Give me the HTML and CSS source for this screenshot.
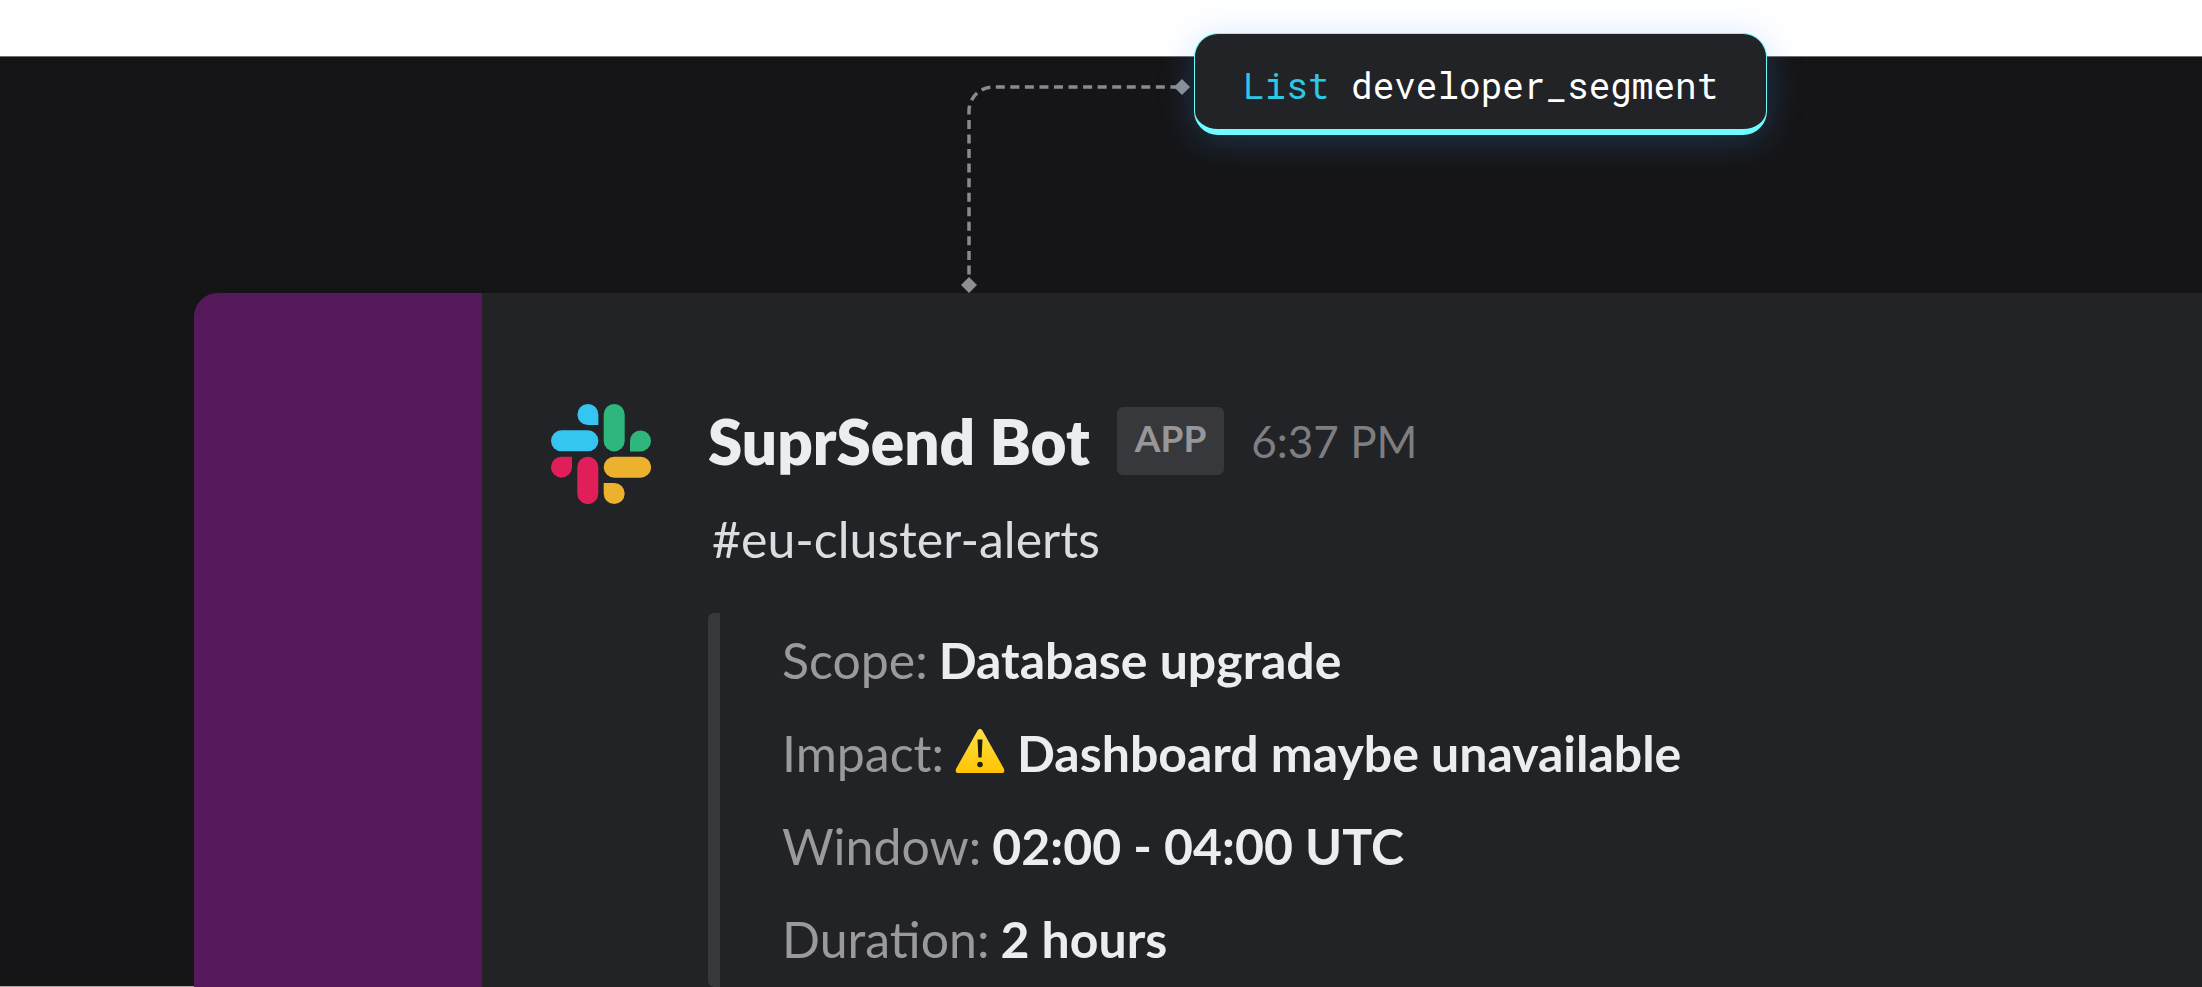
FILE: index.html
```html
<!DOCTYPE html>
<html lang="en">
<head>
  <meta charset="UTF-8">
  <meta name="viewport" content="width=device-width, initial-scale=1.0">
  <title>SuprSend Bot</title>
  <link rel="stylesheet" href="styles.css">
</head>
<body>

  <main class="stage">

    <!-- List tag and the line that ties it to the card -->
    <div class="segment">
      <svg class="connector" width="229" height="214" viewBox="0 0 229 214" aria-hidden="true">
        <path class="connector-line" d="M8 206V32A24 24 0 0 1 32 8H221"/>
        <path class="connector-end" d="M8 198l8 8-8 8-8-8zM221 0l8 8-8 8-8-8z"/>
      </svg>
      <div class="tag"><span class="tag-type">List</span> developer_segment</div>
    </div>

    <!-- Slack card -->
    <section class="card">
      <div class="sidebar"></div>

      <article class="message">
        <svg class="avatar" viewBox="0 0 100 100" role="img" aria-label="Slack">
          <g fill="#36c5f0">
            <rect x="0" y="26.3" width="47.4" height="21" rx="10.5"/>
            <path d="M47.4 21H36.9A10.5 10.5 0 1 1 47.4 10.5z"/>
          </g>
          <g fill="#2eb67d">
            <rect x="52.7" y="0" width="21" height="47.4" rx="10.5"/>
            <path d="M79 47.4V36.9A10.5 10.5 0 1 1 89.5 47.4z"/>
          </g>
          <g fill="#ecb22e">
            <rect x="52.7" y="52.7" width="47.4" height="21" rx="10.5"/>
            <path d="M52.7 79H63.2A10.5 10.5 0 1 1 52.7 89.5z"/>
          </g>
          <g fill="#e01e5a">
            <rect x="26.3" y="52.7" width="21" height="47.4" rx="10.5"/>
            <path d="M21 52.7V63.2A10.5 10.5 0 1 1 10.5 52.7z"/>
          </g>
        </svg>

        <div class="content">
          <header class="message-header">
            <h1 class="name">SuprSend Bot</h1>
            <span class="badge">APP</span>
            <time class="time">6:37 PM</time>
          </header>
          <p class="channel">#eu-cluster-alerts</p>

          <dl class="quote">
            <div class="row">
              <dt>Scope:</dt>
              <dd>Database upgrade</dd>
            </div>
            <div class="row">
              <dt>Impact:</dt>
              <dd>
                <svg class="warning" viewBox="0 0 50 46" aria-hidden="true">
                  <defs>
                    <linearGradient id="warning-fill" x1="0" y1="0" x2="0" y2="1">
                      <stop offset="0" stop-color="#ffe04a"/>
                      <stop offset="1" stop-color="#ffc400"/>
                    </linearGradient>
                  </defs>
                  <path fill="url(#warning-fill)" d="M22.6 2.4Q25-.8 27.4 2.4L48.8 40.5Q50.4 44.8 46.5 45H3.5Q-.4 44.8 1.2 40.5z"/>
                  <path fill="#1d1d10" d="M22.5 11.5h5L26.6 29.5h-3.2z"/>
                  <circle fill="#1d1d10" cx="25" cy="36.5" r="2.8"/>
                </svg>
                Dashboard maybe unavailable
              </dd>
            </div>
            <div class="row">
              <dt>Window:</dt>
              <dd>02:00 - 04:00 UTC</dd>
            </div>
            <div class="row">
              <dt>Duration:</dt>
              <dd>2 hours</dd>
            </div>
          </dl>
        </div>
      </article>
    </section>

  </main>

</body>
</html>
```

FILE: styles.css
```css
* {
  box-sizing: border-box;
}

body {
  display: flex;
  flex-direction: column;
  min-height: 100vh;
  margin: 0;
  padding-top: 56px;
  background-color: #ffffff;
  font-family: Lato, Carlito, sans-serif;
  overflow: hidden;
}

.stage {
  flex: 1;
  display: flex;
  flex-direction: column;
  background-color: #151517;
  border-top: 1px solid #6f6f70;
  border-bottom: 1px solid #a5a5a6;
}

/* Tag and connector */
.segment {
  display: flex;
  align-items: flex-start;
  gap: 4px;
  margin-top: -24px;
  padding-left: 961px;
}

.connector {
  flex: none;
  margin-top: 46px;
}

.connector-line {
  fill: none;
  stroke: #8a8a8c;
  stroke-width: 3.5;
  stroke-dasharray: 9 5.55;
  stroke-dashoffset: 4;
}

.connector-end {
  fill: #8e8e93;
}

.tag {
  padding: 29px 48px 22px;
  background-color: #222327;
  border: 1px solid #6ffbff;
  border-bottom-width: 6px;
  border-radius: 24px;
  box-shadow: 0 4px 36px rgba(70, 160, 255, 0.25);
  color: #ffffff;
  font-family: "Roboto Mono", "DejaVu Sans Mono", monospace;
  font-size: 36px;
  line-height: 44px;
  white-space: nowrap;
}

.tag-type {
  color: #2cc8e6;
}

/* Card */
.card {
  flex: 1;
  display: flex;
  margin: 0 0 -1px 194px;
  background-color: #222327;
  border-top-left-radius: 24px;
  overflow: hidden;
}

.sidebar {
  flex: none;
  width: 288px;
  background-color: #56195c;
}

.message {
  flex: 1;
  display: flex;
  align-items: flex-start;
  gap: 57px;
  padding: 111px 69px 0;
}

.avatar {
  flex: none;
  width: 100px;
  height: 100px;
}

.content {
  flex: 1;
  padding-top: 3px;
}

.message-header {
  display: flex;
  align-items: center;
  gap: 27px;
  height: 68px;
}

.name {
  margin: 0;
  color: #ecedf0;
  font-size: 62px;
  font-weight: 800;
  line-height: 68px;
}

.badge {
  padding: 9px 18px 15px;
  background-color: #37383c;
  border-radius: 6px;
  color: #97979a;
  font-size: 37px;
  font-weight: 700;
  line-height: 44px;
}

.time {
  color: #7e7e81;
  font-size: 44px;
  line-height: 52px;
}

.channel {
  margin: 34px 0 44px;
  padding-left: 4px;
  color: #dcdde1;
  font-size: 50px;
  line-height: 60px;
}

.quote {
  margin: 0;
  padding: 1px 0 1px 62px;
  border-left: 12px solid #38393d;
  border-radius: 6px 0 0 6px;
}

.row {
  display: flex;
  gap: 11px;
  font-size: 50px;
  line-height: 93px;
  white-space: nowrap;
}

.row dt {
  color: #9a9a9c;
}

.row dd {
  display: flex;
  gap: 12px;
  margin: 0;
  color: #ecedf0;
  font-weight: 700;
}

.warning {
  width: 50px;
  height: 46px;
  margin-top: 21px;
}
```
